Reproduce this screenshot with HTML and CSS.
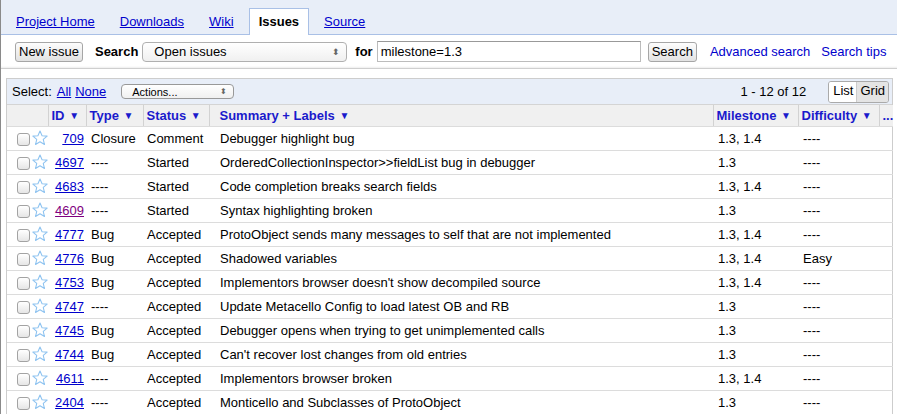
FILE: index.html
```html
<!DOCTYPE html>
<html>
<head>
<meta charset="utf-8">
<link rel="stylesheet" href="styles.css">
</head>
<body>
<div class="tabs">
  <a class="tab" href="#">Project Home</a>
  <a class="tab" href="#">Downloads</a>
  <a class="tab" href="#">Wiki</a>
  <span class="tab active">Issues</span>
  <a class="tab" href="#">Source</a>
</div>
<div class="searchbar">
  <button class="btn new-issue">New issue</button>
  <b class="lbl search-lbl">Search</b>
  <div class="select big-select"><span>Open issues</span><span class="arrows">⬍</span></div>
  <b class="lbl for-lbl">for</b>
  <div class="input">milestone=1.3</div>
  <button class="btn search-btn">Search</button>
  <a class="adv" href="#">Advanced search</a>
  <a class="tips" href="#">Search tips</a>
</div>
<div class="results">
  <div class="selectbar">
    <span class="sel-lbl">Select:</span>
    <a href="#" class="sel-all">All</a>
    <a href="#" class="sel-none">None</a>
    <div class="select actions"><span>Actions...</span><span class="arrows">⬍</span></div>
    <span class="count">1 - 12 of 12</span>
    <div class="seg"><span class="seg-on">List</span><span class="seg-off">Grid</span></div>
  </div>
  <table class="issues">
    <colgroup>
      <col class="c-sel"><col class="c-id"><col class="c-type"><col class="c-status"><col class="c-sum"><col class="c-mile"><col class="c-diff"><col class="c-more">
    </colgroup>
    <thead>
      <tr>
        <th class="first"></th>
        <th>ID <span class="arr">▼</span></th>
        <th>Type <span class="arr">▼</span></th>
        <th>Status <span class="arr">▼</span></th>
        <th class="sum">Summary + Labels <span class="arr">▼</span></th>
        <th>Milestone <span class="arr">▼</span></th>
        <th>Difficulty <span class="arr">▼</span></th>
        <th>...</th>
      </tr>
    </thead>
    <tbody id="rows"></tbody>
  </table>
</div>
<script src="app.js"></script>
</body>
</html>
```
FILE: app.js
```js
var data = [
  ["709","Closure","Comment","Debugger highlight bug","1.3, 1.4","----"],
  ["4697","----","Started","OrderedCollectionInspector>>fieldList bug in debugger","1.3","----"],
  ["4683","----","Started","Code completion breaks search fields","1.3, 1.4","----"],
  ["4609","----","Started","Syntax highlighting broken","1.3","----",1],
  ["4777","Bug","Accepted","ProtoObject sends many messages to self that are not implemented","1.3, 1.4","----"],
  ["4776","Bug","Accepted","Shadowed variables","1.3, 1.4","Easy"],
  ["4753","Bug","Accepted","Implementors browser doesn't show decompiled source","1.3, 1.4","----"],
  ["4747","----","Accepted","Update Metacello Config to load latest OB and RB","1.3","----"],
  ["4745","Bug","Accepted","Debugger opens when trying to get unimplemented calls","1.3","----"],
  ["4744","Bug","Accepted","Can't recover lost changes from old entries","1.3","----"],
  ["4611","----","Accepted","Implementors browser broken","1.3, 1.4","----"],
  ["2404","----","Accepted","Monticello and Subclasses of ProtoObject","1.3","----"]
];
var star = '<svg class="star" width="16" height="16" viewBox="0 0 24 24"><polygon points="12,1.5 15.1,8.6 22.7,9.2 16.9,14.2 18.7,21.8 12,17.7 5.3,21.8 7.1,14.2 1.3,9.2 8.9,8.6" fill="#fff" stroke="#8ec3f0" stroke-width="1.6" stroke-linejoin="round"/></svg>';
var tb = document.getElementById('rows');
var html = '';
data.forEach(function (r) {
  html += '<tr><td class="first"><span class="cb"></span>' + star + '</td>' +
    '<td class="id"><a href="#"' + (r[6] ? ' class="visited"' : '') + '>' + r[0] + '</a></td>' +
    '<td class="type">' + r[1] + '</td>' +
    '<td class="status">' + r[2] + '</td>' +
    '<td class="sum">' + r[3].replace(/>/g, '&gt;') + '</td>' +
    '<td class="mile">' + r[4] + '</td>' +
    '<td class="diff">' + r[5] + '</td>' +
    '<td></td></tr>';
});
tb.innerHTML = html;
```
FILE: styles.css
```css
html, body {
  margin: 0;
  padding: 0;
  background: #fff;
}
body {
  font-family: "Liberation Sans", Arial, sans-serif;
  font-size: 13px;
  color: #000;
  border-left: 1px solid #8a8a8a;
  height: 414px;
  overflow: hidden;
}
a { color: #0000cc; }

.tabs {
  background: #e8eef8;
  border-bottom: 1px solid #a9c0e6;
  display: flex;
  align-items: flex-end;
  padding-left: 5px;
  box-sizing: border-box;
  height: 35px;
}
.tab {
  height: 27px;
  line-height: 25px;
  padding: 0 9px;
  margin-right: 5px;
  box-sizing: border-box;
  color: #0000cc;
  border: 1px solid transparent;
  border-bottom: none;
  margin-bottom: -1px;
}
.tab.active {
  background: #fff;
  border-color: #a9c0e6;
  font-weight: bold;
  color: #000;
  height: 27px;
}

.searchbar {
  height: 33px;
  border-bottom: 1px solid #cfcfcf;
  display: flex;
  align-items: center;
  padding-left: 14px;
  box-shadow: inset 0 -2px 2px -1px #eee;
}
.btn {
  font-family: "Liberation Sans", Arial, sans-serif;
  font-size: 13px;
  height: 20px;
  padding: 0 3px;
  border: 1px solid #a6a6a6;
  border-radius: 3px;
  background: linear-gradient(#fdfdfd, #e2e2e2);
  color: #000;
  white-space: nowrap;
}
.lbl { font-weight: bold; }
.search-lbl { margin-left: 12px; }
.select {
  display: flex;
  align-items: center;
  justify-content: space-between;
  border: 1px solid #b0b0b0;
  border-radius: 4px;
  background: linear-gradient(#ffffff, #f0f0f0);
  box-sizing: border-box;
}
.arrows { color: #666; font-size: 9px; }
.big-select {
  margin-left: 4px;
  width: 205px;
  height: 20px;
  padding: 0 6px 0 11px;
  font-size: 13px;
}
.for-lbl { margin-left: 8px; }
.input {
  margin-left: 4px;
  width: 264px;
  height: 21px;
  box-sizing: border-box;
  border: 1px solid #bcbcbc;
  border-top-color: #999;
  padding-left: 3px;
  line-height: 19px;
}
.search-btn { margin-left: 7px; }
.adv { margin-left: 13px; text-decoration: none; }
.tips { margin-left: 11px; text-decoration: none; }

.results {
  margin: 9px 4px 0 5px;
  border: 1px solid #cdcdcd;
  border-bottom: none;
}
.selectbar {
  height: 25px;
  background: #e8eef8;
  border-bottom: 1px solid #d4d4d4;
  display: flex;
  align-items: center;
  padding-left: 5px;
}
.sel-all { margin-left: 5px; }
.sel-none { margin-left: 4px; }
.actions {
  margin-left: 15px;
  width: 113px;
  height: 15px;
  font-size: 11px;
  padding: 0 6px 0 10px;
  border-color: #999;
}
.actions .arrows { font-size: 8px; }
.count { margin-left: auto; margin-right: 22px; }
.seg {
  display: flex;
  height: 20px;
  border: 1px solid #aaa;
  border-radius: 3px;
  overflow: hidden;
  margin-right: 3px;
  line-height: 18px;
}
.seg-on { background: #fff; padding: 0 3px 0 4px; border-right: 1px solid #ccc; }
.seg-off { background: #e4e4e4; padding: 0 3px; }

.issues {
  width: 885px;
  table-layout: fixed;
  border-collapse: collapse;
}
.c-sel { width: 41px; }
.c-id { width: 38px; }
.c-type { width: 57px; }
.c-status { width: 66px; }
.c-sum { width: 504px; }
.c-mile { width: 85px; }
.c-diff { width: 81px; }
.c-more { width: 14px; }

.issues th {
  height: 21px;
  background: #f0f0f0;
  color: #1a1acc;
  font-weight: bold;
  text-align: left;
  padding: 0 0 0 3px;
  border-left: 1px solid #d2d2d2;
  border-bottom: 1px solid #dcdcdc;
  white-space: nowrap;
}
.issues th.first { border-left: none; }
.issues th.sum { padding-left: 10px; }
.arr { font-size: 10px; vertical-align: 1px; margin-left: 1px; }

.issues td {
  height: 23px;
  padding: 0 0 0 3px;
  border-bottom: 1px solid #dcdcdc;
  white-space: nowrap;
  overflow: hidden;
}
.issues td.first { padding-left: 10px; }
.cb {
  display: inline-block;
  width: 11px;
  height: 11px;
  border: 1px solid #a3a3a3;
  border-radius: 3px;
  background: linear-gradient(#ffffff, #e6e6e6);
  vertical-align: middle;
}
.star { vertical-align: middle; margin-left: 2px; margin-top: -3px; }
.issues td.id { text-align: right; padding: 0 2px 0 0; }
.issues td.type { padding-left: 5px; }
.issues td.status { padding-left: 4px; }
.issues td.sum { padding-left: 11px; }
.issues td.mile { padding-left: 5px; }
.issues td.diff { padding-left: 5px; }
a.visited { color: #800080; }
```
